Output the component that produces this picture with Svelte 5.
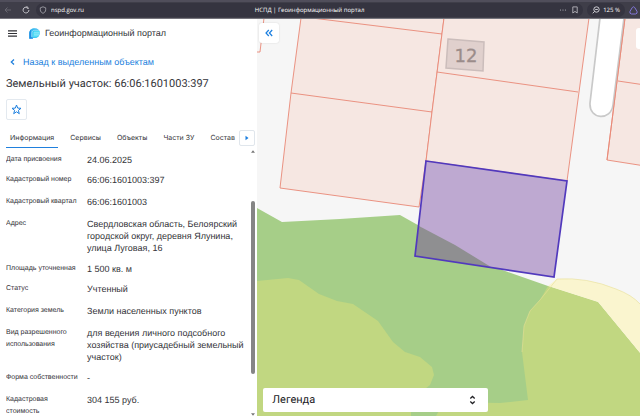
<script>
  const tabs = ['Информация', 'Сервисы', 'Объекты', 'Части ЗУ', 'Состав'];
  let active = $state('Информация');
  const rows = [
    { key: 'Дата присвоения', value: '24.06.2025', size: 'tight' },
    { key: 'Кадастровый номер', value: '66:06:1601003:397' },
    { key: 'Кадастровый квартал', value: '66:06:1601003' },
    { key: 'Адрес', value: 'Свердловская область, Белоярский городской округ, деревня Ялунина, улица Луговая, 16', size: 'tall' },
    { key: 'Площадь уточненная', value: '1 500 кв. м', size: 'tight' },
    { key: 'Статус', value: 'Учтенный' },
    { key: 'Категория земель', value: 'Земли населенных пунктов' },
    { key: 'Вид разрешенного использования', value: 'для ведения личного подсобного хозяйства (приусадебный земельный участок)', size: 'tall' },
    { key: 'Форма собственности', value: '-' },
    { key: 'Кадастровая стоимость', value: '304 155 руб.' }
  ];
</script>

<div class="window">
  <header class="browser">
    <div class="nav">
      <button class="plain" aria-label="Назад">
        <svg width="8" height="8" viewBox="0 0 8 8" fill="none" stroke="#686771"><path d="M7 4H1M3.5 1.5L1 4l2.5 2.5" /></svg>
      </button>
      <button class="plain" aria-label="Обновить">
        <svg width="8" height="8" viewBox="0 0 8 8" fill="none" stroke="#c5c4ca"><path d="M5.4 1.5A2.9 2.9 0 1 0 6.9 4M5 .2v2h2" /></svg>
      </button>
    </div>
    <div class="address">
      <svg width="8" height="8" viewBox="0 0 8 8" fill="none" stroke="#aaa9b1" stroke-width=".8"><path d="M4 .8l2.7 1v2C6.7 5.6 5.4 6.7 4 7.3 2.6 6.7 1.3 5.600 1.300 3.800v-2z" /></svg>
      <input aria-label="Адрес страницы" value="nspd.gov.ru" />
      <span class="page-title">НСПД | Геоинформационный портал</span>
      <button class="plain" aria-label="Меню страницы">
        <svg width="8" height="8" viewBox="0 0 8 8" fill="#b5b4bb"><circle cx="1.500" cy="4" r=".6" /><circle cx="4" cy="4" r=".6" /><circle cx="6.500" cy="4" r=".6" /></svg>
      </button>
      <button class="plain" aria-label="Закладка">
        <svg width="8" height="8" viewBox="0 0 8 8" fill="none" stroke="#b5b4bb" stroke-width=".9"><path d="M1.800 .9h4.400v6.100L4 5.400 1.800 7z" /></svg>
      </button>
    </div>
    <button class="plain zoom">
      <svg width="8" height="8" viewBox="0 0 8 8" fill="none" stroke="#dddce2" stroke-width=".9"><circle cx="4.500" cy="3.500" r="2.700" /><path d="M2.500 5.500L.7 7.300M3.200 3.500h2.600" /></svg>
      125 %
    </button>
    <button class="plain assistant" aria-label="Помощник">
      <svg width="9" height="9" viewBox="0 0 9 9" fill="none" stroke="#8277d8"><path d="M3.300 1.500Q4.500 0 5.700 1.500L8 5.300Q8.800 7.700 6.500 8h-4Q.2 7.700 1 5.300z" /></svg>
    </button>
  </header>

  <main>
    <section class="panel">
      <div class="brand">
        <button class="plain" aria-label="Меню">
          <svg width="9" height="7" viewBox="0 0 9 7" stroke="#303035" stroke-width="1.100"><path d="M0 .9h9M0 3.500h9M0 6.100h9" /></svg>
        </button>
        <svg width="11" height="11" viewBox="0 0 11 11">
          <path d="M.3 10.800V5.300C.3 2 2.500.2 5.500.2 8.800.2 10.700 2 10.700 4.800c0 3.400-2 5.300-5 5.300H3.500z" fill="#35b8ef" />
          <path d="M3.800 9.200V5.500c0-1.700 1-2.700 2.700-2.700h4c.3 4.800-1.500 6.700-4.500 6.800z" fill="#4fdcf5" />
          <path d="M.3 10.800V5.300C.3 3.700.9 2.400 1.900 1.500v5.700c0 1.500.7 2.400 2.100 2.700v.9z" fill="#1d8ce3" />
          <path d="M2.900 9.300V5.200c0-2 1-3 3-3h4M5 4.900h5.500M5 6.900h5" fill="none" stroke="#d5f7ff" stroke-width=".6" />
        </svg>
        <span>Геоинформационный портал</span>
      </div>
      <a class="back" href="#objects">
        <svg width="5" height="8" viewBox="0 0 5 8" fill="none" stroke="#2080dd" stroke-width="1.300"><path d="M4 1.500L1.300 4 4 6.500" /></svg>
        Назад к выделенным объектам
      </a>
      <h1>Земельный участок: 66:06:1601003:397</h1>
      <button class="plain star" aria-label="В избранное">
        <svg width="11" height="11" viewBox="0 0 11 11" fill="none" stroke="#1b7fe0" stroke-linejoin="round"><path d="M5.500 1l1.200 3.100 3.300.2-2.600 2.100.9 3.300-2.800-1.900-2.800 1.900.9-3.300L1 4.300l3.300-.2z" /></svg>
      </button>
      <div class="tabbar">
        <div class="tabs" role="tablist">
          {#each tabs as tab}
            <button class="plain tab" class:active={active === tab} role="tab" aria-selected={active === tab} onclick={() => (active = tab)}>{tab}</button>
          {/each}
        </div>
        <button class="plain next" aria-label="Следующие вкладки">
          <svg width="4" height="6" viewBox="0 0 4 6"><path d="M.5 .8v4.400L3.500 3z" fill="#1b7fe0" /></svg>
        </button>
      </div>
      <div class="details">
        <dl>
          {#each rows as row}
            <div class="row {row.size ?? ''}">
              <dt>{row.key}</dt>
              <dd>{row.value}</dd>
            </div>
          {/each}
        </dl>
        <div class="scroll" aria-hidden="true">
          <svg width="4" height="3" viewBox="0 0 4 3"><path d="M2 .3L4 2.700H0z" fill="#777" /></svg>
          <div class="track"><div class="thumb"></div></div>
          <svg width="4" height="3" viewBox="0 0 4 3"><path d="M2 2.700L4 .3H0z" fill="#777" /></svg>
        </div>
      </div>
    </section>

    <section class="map" aria-label="Карта">
      <svg class="canvas" viewBox="257 19 383 397" preserveAspectRatio="xMinYMin slice">
        <rect x="257" y="18" width="383" height="398" fill="#f6f6f6" />
        <path d="M257 208L282 222 340 219 400 215 416 224 455 245 491 266 548 286 598 302 640 353V416H257z" fill="#a6ce88" />
        <path d="M257 281L288 278 299 280 319 294 337 301 353 304 378 321 393 342 405 352 420 357 432 367 434 375 430 385 411 400V416H257z" fill="#c1d781" />
        <path d="M548 286L598 302 640 353V416H436L444 402 500 403 528 400 522 352 524 326 530 311 540 300z" fill="#c1d781" />
        <path d="M548 286L557 279Q587 277 616 289 632 295 640 304V353L598 302z" fill="#faf5cf" />
        <path d="M522 352L524 326 530 311 540 300 557 279Q587 277 616 289 632 295 640 304" fill="none" stroke="#e8df95" stroke-width=".6" />
        <g fill="#f6e7e2" stroke="#e98876" stroke-width=".9">
          <path d="M301 18L291 93 280 188 419 207 426 161 432 112 444 18z" />
          <path d="M291 93L432 112M312 18L442 34" fill="none" />
          <path d="M444 18L432 112 426 161 567 181 589 18z" />
          <path d="M437 72L578 92" fill="none" />
          <path d="M625 18L607 160 645 166V18z" />
          <path d="M618 81L645 85" fill="none" />
          <path d="M255 52H260L264 18" fill="none" />
        </g>
        <path d="M600 18L590 103C589 120 611 121 613 105L624 18" fill="#fff" stroke="#c9c9c9" stroke-width="1.700" />
        <path d="M625 18L607 160" stroke="#e98876" stroke-width=".9" />
        <path d="M448 39L484 42 483 71 446 68z" fill="#e0d0cd" stroke="#cbbdbb" stroke-width="1.500" />
        <text x="466" y="62" text-anchor="middle">12</text>
        <path d="M426 161L567 181 554 277 415 256z" fill="#bea9d1" />
        <path d="M419 226L455 245 491 267 415 256z" fill="#8f8f91" />
        <path d="M426 161L567 181 554 277 415 256z" fill="none" stroke="#5139bd" stroke-width="1.700" />
      </svg>
      <div class="overlay">
        <button class="plain collapse" aria-label="Свернуть панель">
          <svg width="8" height="8" viewBox="0 0 8 8" fill="none" stroke="#1b7fe0" stroke-width="1.200"><path d="M3.800 1L1 4l2.800 3M7.200 1L4.400 4l2.800 3" /></svg>
        </button>
        <button class="plain tool" aria-label="Инструменты"></button>
        <button class="plain legend">
          Легенда
          <svg width="7" height="10" viewBox="0 0 7 10" fill="none" stroke="#222226" stroke-width="1.300"><path d="M1.300 3.400l2.200-2 2.200 2M1.300 6.600l2.200 2 2.200-2" /></svg>
        </button>
      </div>
    </section>
  </main>
</div>

<style>
  :global(body) { margin: 0; }
  * { box-sizing: border-box; }
  .window {
    display: flex;
    flex-direction: column;
    height: 100vh;
    overflow: hidden;
    font-family: "Liberation Sans", Arial, sans-serif;
    text-rendering: geometricPrecision;
    color: #333338;
    background: #fff;
  }
  .plain {
    display: flex;
    align-items: center;
    padding: 0;
    border: 0;
    background: none;
    color: inherit;
    font: inherit;
    text-rendering: inherit;
    cursor: pointer;
  }
  svg { flex: none; }

  .browser {
    display: flex;
    align-items: center;
    gap: 4px;
    flex: none;
    height: 19px;
    background: #3f3e49;
    border-top: 2px solid #504e5b;
    border-bottom: 1px solid #75747c;
    font: 6px/10px "Open Sans", "Noto Sans", sans-serif;
    color: #fff;
  }
  .nav { display: flex; gap: 10px; padding: 0 2px 0 4px; }
  .address {
    position: relative;
    display: flex;
    align-items: center;
    gap: 4px;
    flex: 1;
    height: 14px;
    padding: 0 4px 0 3px;
    border-radius: 7px;
    background: #353440;
  }
  input {
    flex: 1;
    min-width: 0;
    padding: 0;
    border: 0;
    outline: 0;
    background: none;
    color: inherit;
    font: inherit;
    text-rendering: inherit;
  }
  .page-title { position: absolute; left: 50%; transform: translateX(-50%); white-space: nowrap; }
  .zoom {
    gap: 3px;
    height: 14px;
    padding: 0 5px;
    border-radius: 7px;
    background: #353440;
  }
  .assistant { padding-right: 2px; }

  main { display: flex; flex: 1; min-height: 0; }
  .panel {
    display: flex;
    flex-direction: column;
    flex: 0 0 40.2%;
    min-width: 0;
    padding-left: 6px;
  }
  .brand {
    display: flex;
    align-items: center;
    flex: none;
    height: 28px;
    padding-left: 2px;
    font-size: 9px;
    line-height: 12px;
  }
  .brand > svg { margin: 0 5px 0 12px; }
  .back {
    display: flex;
    align-items: center;
    gap: 8px;
    margin: 9px 0 0 4px;
    font-size: 9px;
    line-height: 12px;
    color: #2080dd;
    text-decoration: none;
  }
  h1 {
    margin: 9px 0 0;
    font-family: Roboto, sans-serif;
    font-size: 11px;
    line-height: 14px;
    font-weight: 400;
  }
  .star {
    justify-content: center;
    flex: none;
    width: 21px;
    height: 21px;
    margin-top: 8px;
    border: 1px solid #e3e9ef;
    border-radius: 2px;
  }
  .tabbar { display: flex; align-items: center; flex: none; margin-top: 8px; padding-right: 2px; }
  .tabs { display: flex; gap: 8px; flex: 1; min-width: 0; overflow: hidden; }
  .tab {
    height: 20px;
    padding: 0 4px;
    border-bottom: 1px solid transparent;
    font-family: Inter, sans-serif;
    font-size: 7px;
    line-height: 10px;
    white-space: nowrap;
  }
  .tab.active { border-color: #2080dd; }
  .next {
    justify-content: center;
    flex: none;
    width: 16px;
    height: 16px;
    border: 1px solid #e0e6ec;
    border-radius: 2px;
  }
  .details { display: flex; flex: 1; min-height: 0; margin-top: 2px; }
  dl { flex: 1; min-width: 0; margin: 0; padding-top: 4px; overflow: hidden; }
  .row { display: flex; padding-bottom: 10px; line-height: 12px; }
  .row.tight { padding-bottom: 8px; }
  .row.tall { padding-bottom: 9px; }
  dt { flex: 0 0 81px; padding-right: 8px; font-size: 7px; line-height: 12px; }
  dd { flex: 1; margin: 0; font-size: 9px; }
  .scroll { display: flex; flex-direction: column; align-items: center; flex: none; width: 8px; }
  .track { display: flex; flex-direction: column; justify-content: center; flex: 1; padding-top: 48px; }
  .track .thumb { margin-bottom: 39px; width: 4px; flex: 1; border-radius: 2px; background: #858585; }

  .map { position: relative; flex: 1; min-width: 0; overflow: hidden; }
  .canvas { position: absolute; inset: 0; width: 100%; height: 100%; }
  .canvas text { font: 18px "DejaVu Sans", sans-serif; fill: #9b8c8a; stroke: #9b8c8a; stroke-width: .3; }
  .overlay { position: absolute; inset: 4px 0 4px 2px; }
  .collapse {
    position: absolute;
    top: 0;
    left: 0;
    justify-content: center;
    width: 20px;
    height: 20px;
    border-radius: 3px;
    background: #fff;
    box-shadow: 0 0 2px #0002;
  }
  .tool {
    position: absolute;
    top: 5px;
    right: 0;
    width: 4px;
    height: 21px;
    border-radius: 3px 0 0 3px;
    background: #fff;
  }
  .legend {
    position: absolute;
    left: 4px;
    bottom: 0;
    justify-content: space-between;
    width: 59%;
    height: 24px;
    padding: 0 12px 0 9px;
    border-radius: 2px;
    background: #fff;
    font-family: Roboto, sans-serif;
    font-size: 11px;
    line-height: 14px;
    color: #222226;
  }
</style>
